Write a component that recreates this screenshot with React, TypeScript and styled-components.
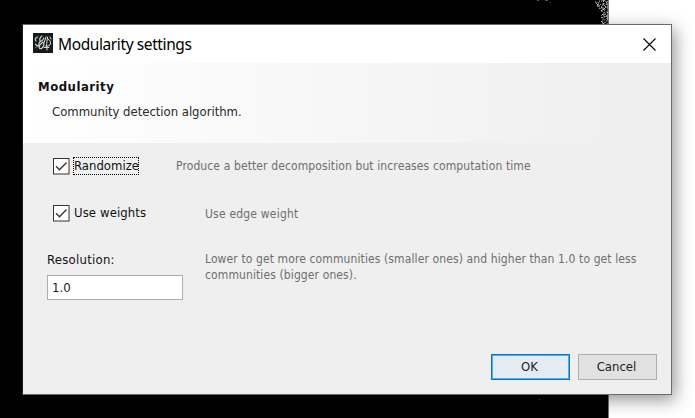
import React, { useState } from "react";
import styled, { createGlobalStyle } from "styled-components";

const GlobalStyle = createGlobalStyle`
  *, *::before, *::after { box-sizing: border-box; }
  html, body { margin: 0; padding: 0; overflow: hidden; }
`;

const uiFont = `"DejaVu Sans Condensed", "DejaVu Sans", sans-serif`;

const Desktop = styled.main`
  position: relative;
  width: 695px;
  height: 418px;
  overflow: hidden;
  padding: 24px 0 0 22px;
  background: linear-gradient(to right, #000 608px, #777 608px, #777 609px, #fff 609px);
  font-family: ${uiFont};
`;

const Specks = styled.svg`
  position: absolute;
  left: 0;
  top: 0;
  width: 695px;
  height: 418px;
`;

const Dialog = styled.section`
  position: relative;
  width: 650px;
  height: 371px;
  display: flex;
  flex-direction: column;
  border: 1px solid #6b6b6b;
  border-left-color: #1b1b1b;
  background: #efefef;
  box-shadow: 3px 5px 16px rgba(0, 0, 0, 0.42);
`;

const TitleBar = styled.header`
  height: 38px;
  flex: none;
  display: flex;
  align-items: center;
  padding: 0 20px 0 10px;
  background: #fff;
`;

const AppIcon = styled.svg`
  width: 20px;
  height: 20px;
  display: block;
  margin-top: -2px;
`;

const Title = styled.h1`
  margin: 0 auto 0 5px;
  font: 400 15.5px/20px "Noto Sans", "Open Sans", sans-serif;
  letter-spacing: -0.4px;
  color: #000;
  white-space: nowrap;
`;

const CloseButton = styled.button`
  width: 13px;
  height: 13px;
  margin: 0 -5px 0 0;
  padding: 0;
  border: 0;
  background: none;
  svg { display: block; }
`;

const Banner = styled.div`
  height: 80px;
  flex: none;
  padding: 15px 15px 0;
  background: linear-gradient(to right, #fff, #efefef 94%);
`;

const Heading = styled.h2`
  margin: 0;
  font-size: 13px;
  font-weight: 700;
  line-height: 18px;
  letter-spacing: 0.5px;
  color: #111;
`;

const Summary = styled.p`
  margin: 7px 0 0 14px;
  font-size: 13px;
  line-height: 18px;
  letter-spacing: -0.03px;
  color: #2b2b2b;
  white-space: nowrap;
`;

const Settings = styled.div`
  flex: 1;
  padding: 13px 0 0 24px;
`;

const Row = styled.div<{ $height: number; $label: number }>`
  display: grid;
  grid-template-columns: ${(p) => p.$label}px 1fr;
  align-items: start;
  height: ${(p) => p.$height}px;
`;

const CheckLabel = styled.label`
  display: flex;
  align-items: center;
  margin-left: 6px;
  height: 20px;
`;

const CheckMark = styled.svg`
  flex: none;
  width: 17px;
  height: 17px;
`;

const LabelText = styled.span<{ $focused?: boolean; $spacing: number }>`
  height: 18px;
  margin-left: 3px;
  padding-left: 1px;
  outline: ${(p) => (p.$focused ? "1px dotted #000" : "none")};
  outline-offset: -1px;
  font-size: 13px;
  line-height: 17px;
  letter-spacing: ${(p) => p.$spacing}px;
  color: #111;
  white-space: nowrap;
`;

const Hint = styled.p<{ $top?: number; $spacing: number }>`
  margin: ${(p) => p.$top ?? 2}px 0 0;
  font-size: 12px;
  line-height: 16px;
  letter-spacing: ${(p) => p.$spacing}px;
  color: #6e6e6e;
  white-space: nowrap;
`;

const Field = styled.label`
  display: flex;
  flex-direction: column;
  padding-top: 1px;
  font-size: 13px;
  line-height: 18px;
  letter-spacing: 0.25px;
  color: #111;
`;

const Input = styled.input`
  width: 136px;
  height: 25px;
  margin-top: 6px;
  padding: 0 4px;
  border: 1px solid #abadb3;
  outline: 0;
  background: #fff;
  font: 13px ${uiFont};
  letter-spacing: 0.1px;
  color: #222;
`;

const Actions = styled.footer`
  display: flex;
  justify-content: flex-end;
  gap: 8px;
  padding: 0 14px 14px 0;
`;

const Button = styled.button<{ $primary?: boolean }>`
  width: 79px;
  height: 26px;
  padding: 0 2px 1px 0;
  border: 1px solid ${(p) => (p.$primary ? "#0078d7" : "#adadad")};
  box-shadow: ${(p) => (p.$primary ? "inset 0 0 0 1px #55aaea" : "none")};
  background: ${(p) => (p.$primary ? "#e5ebf2" : "#e1e1e1")};
  font: 13px ${uiFont};
  letter-spacing: 0;
  color: #222;
`;

function Checkbox({ label, focused, spacing }: { label: string; focused?: boolean; spacing: number }) {
  return (
    <CheckLabel>
      <CheckMark viewBox="0 0 17 17">
        <rect x="0.5" y="0.5" width="15.5" height="15.5" fill="#fff" stroke="#333" />
        <path d="M3 8.2 6.5 11.7 13.5 4.5" fill="none" stroke="#333" strokeWidth="1.3" />
      </CheckMark>
      <LabelText $focused={focused} $spacing={spacing}>{label}</LabelText>
    </CheckLabel>
  );
}

const tones = ["#444", "#999", "#2a2a2a", "#bbb", "#777", "#666"];

function noise(seed: number) {
  const v = Math.sin(seed * 127.1 + 11.7) * 43758.5453;
  return v - Math.floor(v);
}

const specks = Array.from({ length: 230 }, (_, i) => {
  const y = Math.floor(noise(i) * 24);
  const spread = y < 10 ? 14 - y * 0.5 : 7;
  return {
    x: 607 - Math.floor(noise(i + 500) ** 1.3 * spread),
    y,
    tone: tones[Math.floor(noise(i + 900) * tones.length)],
  };
});

export default function App() {
  const [resolution, setResolution] = useState("1.0");
  return (
    <Desktop>
      <GlobalStyle />
      <Specks viewBox="0 0 695 418" shapeRendering="crispEdges">
        {specks.map((s, i) => (
          <rect key={i} x={s.x} y={s.y} width="1" height="1" fill={s.tone} />
        ))}
        <path d="M537 0h2v1h-2zM545 0h3v1h-3zM550 2h1v1h-1zM539 399h1v1h-1z" fill="#555" />
      </Specks>
      <Dialog>
        <TitleBar>
          <AppIcon viewBox="0 0 20 20">
            <rect width="20" height="20" fill="#17191b" />
            <g fill="none" stroke="#d8d8d8" strokeLinecap="round">
              <path d="M4 4Q1 6 3 8M9 3Q6 5 7 8Q9 9 11 5M8 8Q5 10 6 13Q3 13 2.5 11M10 9Q12 12 9 15Q7 17 6 14Q7 11 10 9" strokeWidth="1.1" />
              <path d="M13 4 11 10M14.5 4Q13 10 14 17M15 6Q19 8 17 12Q15 14 12 13M17 4 18 6M11 14.5H16" strokeWidth="1" />
              <path d="M5 3 3.5 6M2 15 5 13" stroke="#888" strokeWidth="0.8" />
            </g>
          </AppIcon>
          <Title>Modularity settings</Title>
          <CloseButton aria-label="Close">
            <svg width="13" height="13" viewBox="0 0 13 13">
              <path d="M.5.5l12 12M12.5.5l-12 12" stroke="#000" strokeWidth="1.1" />
            </svg>
          </CloseButton>
        </TitleBar>
        <Banner>
          <Heading>Modularity</Heading>
          <Summary>Community detection algorithm.</Summary>
        </Banner>
        <Settings>
          <Row $height={47} $label={129}>
            <Checkbox label="Randomize" focused spacing={0} />
            <Hint $spacing={0.11}>Produce a better decomposition but increases computation time</Hint>
          </Row>
          <Row $height={47} $label={158}>
            <Checkbox label="Use weights" spacing={0.1} />
            <Hint $top={3} $spacing={0.2}>Use edge weight</Hint>
          </Row>
          <Row $height={60} $label={158}>
            <Field>
              Resolution:
              <Input value={resolution} onChange={(e) => setResolution(e.target.value)} />
            </Field>
            <Hint $top={1} $spacing={0.11}>
              Lower to get more communities (smaller ones) and higher than 1.0 to get less
              <br />
              communities (bigger ones).
            </Hint>
          </Row>
        </Settings>
        <Actions>
          <Button $primary>OK</Button>
          <Button>Cancel</Button>
        </Actions>
      </Dialog>
    </Desktop>
  );
}
